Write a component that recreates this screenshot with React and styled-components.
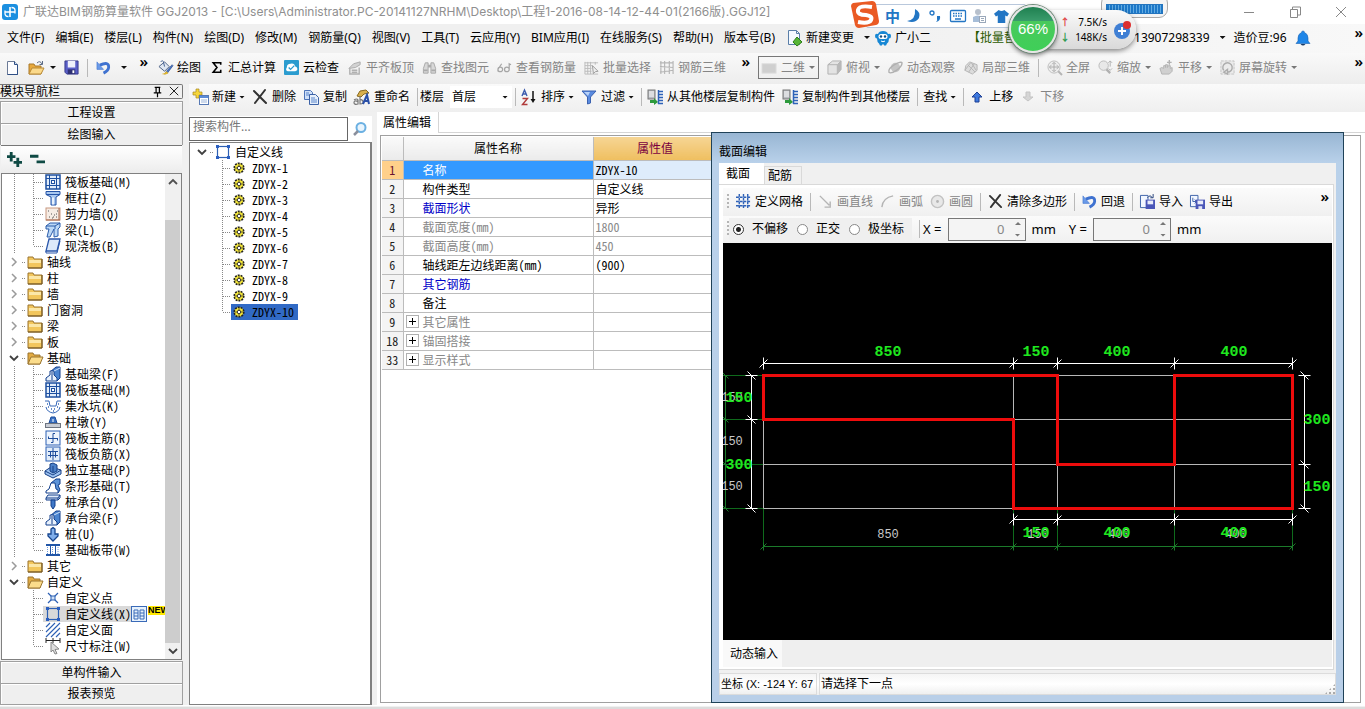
import React, { Component } from 'react';
import styled, { createGlobalStyle, css } from 'styled-components';

const uiFont = '"Noto Sans", "Noto Sans CJK SC", sans-serif';
const gridFont = '"Noto Sans CJK SC", "Liberation Mono", monospace';

const GlobalStyle = createGlobalStyle`
  *, *::before, *::after {
    box-sizing: border-box;
  }
  body {
    margin: 0;
    background: #f0f0f0;
    color: #000;
    font: 12px/16px ${uiFont};
    overflow: hidden;
  }
  button, input, select {
    font: inherit;
    color: inherit;
  }
  ul {
    margin: 0;
    padding: 0;
    list-style: none;
  }
`;

/* ---------- icons ---------- */

const Svg = styled.svg`
  flex: none;
  display: block;
  overflow: visible;
`;

const shapes = {
  app: (
    <>
      <rect x="0" y="0" width="16" height="16" rx="3" fill="#1b8fe0" />
      <path d="M8 3v10M3 8h10" stroke="#fff" strokeWidth="1.600" fill="none" />
      <path d="M3 6.500v3q0 3 3.500 3M13 9.500v-3q0-3-3.500-3" stroke="#fff" strokeWidth="1.300" fill="none" />
    </>
  ),
  file: (
    <>
      <path d="M3.500 1.500h7l3 3v10h-10z" fill="#fdfdff" stroke="#6b7a96" />
      <path d="M10.500 1.500v3h3" fill="#cfe0f5" stroke="#2f4f86" />
      <path d="M13.500 5v9.500h-10" fill="none" stroke="#2f4f86" />
    </>
  ),
  openFile: (
    <>
      <path d="M1 4h5l1 2h6v8H1z" fill="#e8a93c" stroke="#a8792a" />
      <path d="M4 8h12l-3 6H1z" fill="#fbd98a" stroke="#b98a36" />
      <path d="M9 3q3-3 5 1M14.500 1v3.500h-3" fill="none" stroke="#5b6b85" />
    </>
  ),
  save: (
    <>
      <path d="M1 1h14v14H3l-2-2z" fill="#5a5fc8" stroke="#34388a" />
      <rect x="4" y="1" width="8" height="7" fill="#eef0fb" />
      <rect x="4" y="10" width="8" height="5" fill="#2f3175" />
      <rect x="9" y="11" width="2" height="3" fill="#fff" />
    </>
  ),
  undo: (
    <>
      <path d="M4 5.500q10-4.500 9.500 2.500-.5 3.500-5.500 6" fill="none" stroke="#3f72d0" strokeWidth="3" />
      <path d="M1 2v8h7z" fill="#6a9ae8" stroke="#3f72d0" strokeWidth="0.600" />
    </>
  ),
  paint: (
    <>
      <path d="M1 7l6-5 5 5-5 5z" fill="#dfe7f2" stroke="#4a5f82" />
      <path d="M3 2q2-3 3 1l1 4" fill="none" stroke="#39588c" />
      <path d="M15 5l-6 7-2 3 3-1 6-8z" fill="#4a78c8" stroke="#223f7a" strokeWidth="0.600" />
      <path d="M9 12q-2 3-5 3 4 1 7-1z" fill="#e3b72f" />
    </>
  ),
  sigma: <path d="M12.500 5V3H4.500l4 5-4 5h8v-2.500" fill="none" stroke="#000" strokeWidth="1.700" />,
  cloudCheck: (
    <>
      <rect width="16" height="16" rx="1" fill="#2b9ccf" />
      <path d="M4 12q-3-1-1-4 0-4 4-4 4-1 5 3 3 1 2 4l-2 1z" fill="#fff" />
      <path d="M5 8l2 2 4-4" fill="none" stroke="#2b9ccf" strokeWidth="1.500" />
    </>
  ),
  alignTop: (
    <>
      <path d="M2 9l5-5 7-2v3l-5 3z" fill="#d2d2d2" stroke="#aaa" />
      <path d="M3 9v6h10V8M5 11h6M5 13h6" fill="none" stroke="#b0b0b0" strokeWidth="1.500" />
    </>
  ),
  binoculars: (
    <>
      <path d="M1.500 14V9l2-6h3v11zM9.500 14V3h3l2 6v5z" fill="#d8d8d8" stroke="#a8a8a8" />
      <path d="M6.500 5h3v3h-3z" fill="#aaa" />
      <path d="M2 11h4M10 11h4" stroke="#aaa" strokeWidth="2" />
    </>
  ),
  glasses: (
    <path
      d="M1 10a2.500 2.500 0 1 0 5 0 2.500 2.500 0 1 0-5 0L5 4M8 10a2.500 2.500 0 1 0 5 0 2.500 2.500 0 1 0-5 0zM13 10V4l2 1"
      fill="none"
      stroke="#a6a6a6"
      strokeWidth="1.300"
    />
  ),
  batch: (
    <>
      <path d="M1 2v13M4 2v13M7 2v13M1 3h14M1 6h8M1 9h7M1 12h7M1 15h14M12 2v3" stroke="#bbb" fill="none" />
      <path d="M9 6l6 6-3 .5-2 2z" fill="#eee" stroke="#999" />
    </>
  ),
  rebar3d: (
    <path d="M2 1v14M6 1v14M11 1v14M15 1v14M1 3h14M1 7l14 1M1 13l14-2" fill="none" stroke="#b5b5b5" strokeWidth="1.200" />
  ),
  plate: <rect x="0" y="4" width="15" height="10" fill="#cfcfcf" stroke="#dedede" />,
  cube: (
    <>
      <path d="M1 5l5-4h9v9l-4 5H1z" fill="#e3e3e3" stroke="#b0b0b0" />
      <path d="M1 5h10v10M11 5l4-4" fill="none" stroke="#b0b0b0" />
      <path d="M11 5l4-4v9l-4 5z" fill="#b8b8b8" />
    </>
  ),
  orbit: (
    <>
      <circle cx="8" cy="8" r="5" fill="#c4c4c4" />
      <path d="M1 13q-1-4 6-8t8-2q0 4-6 8t-8 2z" fill="none" stroke="#b0b0b0" strokeWidth="1.500" />
    </>
  ),
  part3d: (
    <>
      <path d="M3 6l4-4 8 3v6l-5 4-8-4z" fill="#dcdcdc" stroke="#b4b4b4" />
      <path d="M2 11l6-8M6 13l6-9M5 5l8 8M9 3l5 8" stroke="#b4b4b4" fill="none" />
    </>
  ),
  fullView: (
    <>
      <circle cx="7.500" cy="7.500" r="6.500" fill="#ececec" stroke="#bdbdbd" />
      <path d="M7.500 3v9M3 7.500h9M5.500 4.500l2-2 2 2M5.500 10.500l2 2 2-2M4.500 5.500l-2 2 2 2M10.500 5.500l2 2-2 2" fill="none" stroke="#aaa" />
      <path d="M12 12l4 4" stroke="#b5b5b5" strokeWidth="2" />
    </>
  ),
  zoom: (
    <>
      <circle cx="6" cy="6" r="5" fill="#e8e8e8" stroke="#bababa" />
      <path d="M9 10l4 4" stroke="#b0b0b0" strokeWidth="2.500" />
      <path d="M13 1v6M11 3l2-2 2 2M11 9l2 2 2-2" fill="none" stroke="#b0b0b0" />
    </>
  ),
  pan: (
    <>
      <path d="M3 15l-2-6 2-1 2 1V6h2v2V5h2v3l1-2h2v3l2-1v4l-3 3z" fill="#d0d0d0" stroke="#b2b2b2" />
      <path d="M11 0v5M8.500 2.500h5" stroke="#b2b2b2" strokeWidth="1.500" />
    </>
  ),
  rotate: (
    <>
      <rect x="1" y="1" width="14" height="14" fill="#ebebeb" stroke="#c2c2c2" strokeDasharray="3 1" />
      <path d="M4 11a5 5 0 1 1 4 2M8 10v5l-4-2z" fill="none" stroke="#adadad" strokeWidth="1.500" />
    </>
  ),
  create: (
    <>
      <path d="M4 0h3v3h3v3H7v3H4V6H1V3h3z" fill="#f5d63c" stroke="#a88820" strokeWidth="0.700" />
      <rect x="7.500" y="6.500" width="9" height="9" fill="#fff" stroke="#5779b4" />
      <path d="M8 7h8v2H8z" fill="#5b8bd8" />
      <path d="M9 11h6M9 13h6" stroke="#9db5da" />
    </>
  ),
  remove: <path d="M2 2l12 12M13 1L3 14" stroke="#333" strokeWidth="2" strokeLinecap="round" />,
  copy: (
    <>
      <path d="M1.500 1.500h6l2 2v7h-8z" fill="#cfe0f8" stroke="#4d74b8" />
      <path d="M6.500 5.500h6l3 3v7h-9z" fill="#e6effb" stroke="#3c62a6" />
      <path d="M8 9h4M8 11h6M8 13h6M3 4h3M3 6h3" stroke="#5b86cc" />
    </>
  ),
  rename: (
    <>
      <path d="M3 7l3-5 6-1 3 3-5 1-3 3z" fill="#d9b04c" stroke="#8a6a20" />
      <path d="M0 11q3-2 4 0v4q-4 1-4-1.500t4-1M6 7v8q4 0 3-2.500t-3-1.500" fill="none" stroke="#777" strokeWidth="1.200" />
      <path d="M9 15l4-9 2 9M10.500 12h4" fill="none" stroke="#2a50a8" strokeWidth="2" />
    </>
  ),
  sort: (
    <>
      <path d="M1 7l2.500-6L6 7M2 5h3" fill="none" stroke="#3d5cae" strokeWidth="1.400" />
      <path d="M1.500 9.500h5l-5 6h5" fill="none" stroke="#b03a3a" strokeWidth="1.400" />
      <path d="M12 2v10" stroke="#111" strokeWidth="1.500" />
      <path d="M9.500 10h5L12 14z" fill="#111" />
    </>
  ),
  funnel: (
    <>
      <path d="M1 2h14l-5.500 6v6l-3 1V8z" fill="#5a8be0" stroke="#3b62b0" />
      <path d="M3 3h6L7 7z" fill="#b8d2f8" />
    </>
  ),
  floorCopy: (
    <>
      <rect x="1" y="1" width="7" height="9" fill="#b9bcc2" stroke="#777" />
      <path d="M2 3h5M2 5h5M2 7h5" stroke="#fff" />
      <path d="M3 11h4V9l4 4-4 3v-2H3z" fill="#2d9a3c" />
      <path d="M11.500 1v14M11 2.500h5M11 5.500h5M11 8.500h5M11 11.500h5M11 14.500h5" stroke="#2d62b8" strokeWidth="1.500" />
    </>
  ),
  up: <path d="M8 3l5 5h-3v5H6V8H3z" fill="#3d78dd" stroke="#1d3f94" />,
  down: <path d="M8 12L3 8h3V3h4v5h3z" fill="#d5d5d5" stroke="#c4c4c4" />,
  change: (
    <>
      <path d="M2.500 .5h8l3 3v11h-11z" fill="#f4f9ff" stroke="#5a7ea8" />
      <path d="M10.500 .5v3h3" fill="none" stroke="#5a7ea8" />
      <path d="M11 7l5 5-5 4-4-4z" fill="#56b436" stroke="#2c7d18" />
    </>
  ),
  mascot: (
    <>
      <path d="M0 6q0-3 3-2 1-3 5-3t5 3q3-1 3 2 0 2.500-2 2.500 0 3.500-2 5l-1 2H9v-1H7v1H5l-1-2q-2-1.500-2-5-2 0-2-2.500z" fill="#1787d4" />
      <rect x="3.500" y="4" width="9" height="5" rx="2.500" fill="#fff" />
      <circle cx="6" cy="6.500" r="1.200" fill="#134f80" />
      <circle cx="10" cy="6.500" r="1.200" fill="#134f80" />
      <path d="M6 11q2 1.500 4 0" fill="none" stroke="#fff" />
    </>
  ),
  bell: (
    <>
      <path d="M8 1q1.500 0 1.500 1.500Q13 4 13 8v3l2 2.500H1L3 11V8q0-4 3.500-5.500Q6.500 1 8 1z" fill="#1f86e8" stroke="#1a63b4" strokeWidth="0.600" />
      <path d="M5.500 14h5q-2.500 3-5 0z" fill="#183a66" />
    </>
  ),
  search: (
    <>
      <circle cx="9" cy="6.500" r="4.500" fill="#e8f4fd" stroke="#6bb0e2" strokeWidth="2" />
      <path d="M6 10l-4 4" stroke="#8a8f9c" strokeWidth="2.500" />
    </>
  ),
  folder: (
    <>
      <path d="M1 3h5l1 2h8v9H1z" fill="#f2c65c" stroke="#9a7530" />
      <path d="M2 6h12v3H2z" fill="#fbe7a8" />
      <path d="M1 14h14V5" fill="none" stroke="#6f5320" />
    </>
  ),
  folderOpen: (
    <>
      <path d="M1 3h5l1 2h6v9H1z" fill="#e3ab41" stroke="#9a7530" />
      <path d="M4 7h12l-3 7H1z" fill="#fbdc8b" stroke="#9a7530" />
    </>
  ),
  raft: (
    <>
      <rect x="1" y="1" width="14" height="14" fill="#e2edfa" stroke="#1d4fa0" strokeWidth="1.500" />
      <path d="M4.500 1v14M11.500 1v14M1 4.500h14M1 11.500h14" stroke="#1d4fa0" />
      <rect x="6.500" y="6.500" width="3" height="3" fill="#fff" stroke="#1d4fa0" />
    </>
  ),
  column: (
    <>
      <path d="M1 1.500h14v3l-4 2.500v8H6V7L1 4.500z" fill="#a9c8f0" stroke="#2553a6" />
      <path d="M1 4.500h14" stroke="#2553a6" />
      <path d="M8 7.500v7" stroke="#fff" strokeWidth="1.500" />
    </>
  ),
  wall: (
    <>
      <rect x="1" y="2" width="14" height="12" fill="#f6ece4" stroke="#c79880" />
      <path d="M3 5h1M6 8h1M4 11h1M8 11h1M9 9h1M11 11h1M12 5h1M7 12h1M11 8h1" stroke="#555" />
      <path d="M14 2v12M1 14h14" stroke="#a8664a" />
    </>
  ),
  beam: (
    <>
      <path d="M1 4l4-3h10v4l-2 2v7l-4 1V7L5 15H2l2-8H1z" fill="#bcd8f6" stroke="#2a5cab" />
      <path d="M1 4h9l5-3M10 4v3" fill="none" stroke="#2a5cab" />
    </>
  ),
  slab: (
    <>
      <path d="M4 1h11l-3 12H1z" fill="#dce9fa" stroke="#2b57ab" strokeWidth="1.300" />
      <path d="M1 13v2h11l3-12" fill="none" stroke="#2b57ab" />
    </>
  ),
  foundBeam: (
    <>
      <path d="M5 6l6-5h4v11l-3 3" fill="#4a84d0" stroke="#123f8c" />
      <path d="M1 15v-3l4-3V5h4v4l3 3v3z" fill="#e8f1fc" stroke="#123f8c" />
      <path d="M7 6v8" stroke="#123f8c" />
      <path d="M9 5l6-3" stroke="#cfe2f8" />
    </>
  ),
  pit: (
    <>
      <path d="M0 3h4l1 5h6l1-5h4M1 9q1 5 7 6 6-1 7-6" fill="none" stroke="#3768b8" />
      <path d="M2 6h1M13 6h1M3 9h1M6 11h1M9 11h1M12 9h1M8 13h1" stroke="#3768b8" strokeWidth="1.500" />
    </>
  ),
  pier: (
    <>
      <path d="M4 9l2-6h4l2 6z" fill="#3d74c4" stroke="#1d4c9c" />
      <path d="M7.500 5h1v3h-1z" fill="#fff" />
      <rect x="0.500" y="9.500" width="15" height="4" fill="#c8ccd4" stroke="#6d7480" />
    </>
  ),
  mainBar: (
    <>
      <rect x="1" y="1" width="14" height="14" fill="#edf4fd" stroke="#2d60b4" />
      <path d="M8 3.500v9M3 8.500h10M8 3.500h2M8 12.500H6M3.500 8.500v-2M12.500 8.500v2" fill="none" stroke="#1d4c9c" />
    </>
  ),
  negBar: (
    <>
      <rect x="1" y="1" width="14" height="14" fill="#e2edfa" stroke="#2d60b4" />
      <path d="M8 2v12M3 5.500h10M3 9.500h10M5.500 5.500v6M10.500 5.500v6" fill="none" stroke="#1d4c9c" />
    </>
  ),
  isolated: (
    <>
      <path d="M0 9l6-4 10 3v4l-8 4-8-4z" fill="#9dc2f0" stroke="#163f86" />
      <path d="M5 2l3-1 4 2v6l-4 2-3-2z" fill="#4a80c8" stroke="#163f86" />
      <path d="M8 4v6" stroke="#163f86" />
      <path d="M0 9l8 4 8-5" fill="none" stroke="#163f86" />
    </>
  ),
  strip: (
    <>
      <path d="M6 5l5-4h4v5l-2 1 2 5-2 3z" fill="#5c93d8" stroke="#123f8c" />
      <path d="M1 15h12v-3l-2-1-1-6H6l-2 6-3 2z" fill="#fff" stroke="#123f8c" />
    </>
  ),
  pileCap: (
    <>
      <path d="M1 4l2-3h12v3l-2 2H1z" fill="#dfeafa" stroke="#123f8c" />
      <path d="M1 4h12l2-3M13 4v2" fill="none" stroke="#123f8c" />
      <path d="M6 6h4v6l-2 3-2-3z" fill="#3f78c8" stroke="#123f8c" />
    </>
  ),
  pile: <path d="M8 1.500l2 1.500v5h3v2l-5 5-5-5V8h3V3z" fill="#7fadea" stroke="#16458f" strokeWidth="1.300" />,
  band: (
    <>
      <path d="M1 3h14M1 13h14" stroke="#2156a8" strokeWidth="1.800" />
      <path d="M5.500 3v10M10.500 3v10" stroke="#2156a8" />
      <path d="M2.500 5v8M7.500 5v8M13 5v8" stroke="#6f9ad8" strokeDasharray="1 1" />
    </>
  ),
  point: (
    <>
      <path d="M3 3l10 10M13 3L3 13" stroke="#2d60b4" strokeWidth="1.200" />
      <rect x="6" y="6" width="4" height="4" fill="#cfe0f5" stroke="#2d60b4" />
    </>
  ),
  polyline: (
    <>
      <rect x="2.500" y="2.500" width="11" height="11" fill="none" stroke="#2d60b4" strokeWidth="1.200" />
      <path d="M1 1h3v3H1zM12 1h3v3h-3zM1 12h3v3H1zM12 12h3v3h-3z" fill="#2b5fc0" />
    </>
  ),
  hatch: (
    <path d="M1 5l4-4M1 10l9-9M1 15L15 1M6 15l9-9M11 15l4-4" stroke="#2d60b4" strokeWidth="1.100" />
  ),
  dimension: (
    <>
      <path d="M1 0v5M8 0v5M15 0v5M1 2.500h14" stroke="#222" />
      <path d="M6 4l8 7-4 .5 2 4-2 .5-2-4-2 2z" fill="#ddd" stroke="#888" />
    </>
  ),
  table: (
    <>
      <rect x="0.500" y="0.500" width="15" height="15" fill="#e6f1fc" stroke="#3a6ab8" />
      <path d="M3 4h4v9H3zM9 4h4v9H9zM3 7h4M3 10h4M9 7h4M9 10h4" fill="none" stroke="#3a6ab8" />
    </>
  ),
  gear: (
    <>
      <circle cx="8" cy="8" r="5.500" fill="#f4e638" stroke="#222" strokeWidth="1.800" strokeDasharray="2.200 1.200" />
      <path d="M8 3v10M3 8h10" stroke="#222" strokeWidth="0.800" />
      <circle cx="8" cy="8" r="2" fill="#fff" stroke="#222" />
    </>
  ),
  expandAll: (
    <path d="M4.500 0v10M0 5h9M11.500 6v10M7 11h9" stroke="#0f4a44" strokeWidth="3" />
  ),
  collapseAll: <path d="M0 4.500h9M7 10.500h9" stroke="#0f4a44" strokeWidth="3" />,
  mesh: <path d="M3.500 0v16M8 0v16M12.500 0v16M0 3.500h16M0 8h16M0 12.500h16" stroke="#2f62b8" strokeWidth="1.500" strokeDasharray="3 1" />,
  line: <path d="M2 2l10 10M13 8v6H7" fill="none" stroke="#b4b4b4" strokeWidth="1.500" />,
  arc: <path d="M2 14Q3 4 14 2" fill="none" stroke="#b4b4b4" strokeWidth="1.500" />,
  circle: (
    <>
      <circle cx="8" cy="8" r="6.500" fill="#e8e8e8" stroke="#c2c2c2" strokeWidth="1.500" />
      <circle cx="8" cy="8" r="1.500" fill="#b4b4b4" />
    </>
  ),
  importFile: (
    <>
      <path d="M.5 1.500h8v13h-8z" fill="#f2f7ff" stroke="#3a5fa8" />
      <rect x="6" y="6" width="10" height="10" fill="#4a56b8" />
      <rect x="8" y="7" width="6" height="4" fill="#e8ebfa" />
      <path d="M8 4q3-4 5 0M14 0v4h-3" fill="none" stroke="#223f7a" />
    </>
  ),
  exportFile: (
    <>
      <path d="M.5 1.500h8v12h-8z" fill="#f2f7ff" stroke="#3a5fa8" />
      <path d="M3 4v4h4M5 6l2 2-2 2" fill="none" stroke="#3a5fa8" />
      <rect x="6" y="6" width="10" height="10" fill="#4a56b8" />
      <rect x="8" y="7" width="6" height="4" fill="#e8ebfa" />
      <rect x="9" y="13" width="4" height="3" fill="#dfe2f5" />
    </>
  ),
  pin: <path d="M5 3.500h6M6.500 3v6M10 3v6M4 9.500h8M8 10v4" stroke="#000" strokeWidth="1.300" />,
  cross: <path d="M3 3l9 9M12 3l-9 9" stroke="#111" />,
  right: <path d="M6 4l4 4-4 4" fill="none" stroke="#9a9a9a" strokeWidth="1.500" />,
  open: <path d="M4 6l4 4 4-4" fill="none" stroke="#404040" strokeWidth="1.800" />,
  scrollUp: <path d="M4 10l4-4 4 4" fill="none" stroke="#505050" strokeWidth="1.800" />,
  moon: <path d="M9 1q6 3 4 9-4 6-12 3 9-1 8-12z" fill="#2376c4" />,
  comma: (
    <>
      <circle cx="4" cy="5" r="2" fill="none" stroke="#2376c4" strokeWidth="1.300" />
      <path d="M9 8h3q1 5-4 6 2-2 1-3z" fill="#2376c4" />
    </>
  ),
  keyboard: (
    <>
      <rect x="0.500" y="2.500" width="15" height="11" rx="1" fill="none" stroke="#2376c4" strokeWidth="1.300" />
      <path d="M3 5.500h10M3 8h10" stroke="#2376c4" strokeWidth="1.500" strokeDasharray="1.500 1" />
      <path d="M5 11h6" stroke="#2376c4" strokeWidth="1.500" />
    </>
  ),
  person: (
    <>
      <circle cx="6" cy="4" r="3" fill="#b7c0cc" />
      <path d="M1 14V9q5-3 9 0v5z" fill="#a6bdd8" />
      <rect x="7.500" y="8.500" width="6" height="6" fill="#fff" stroke="#9aa8ba" />
      <path d="M9 10.500h3M9 12.500h3" stroke="#9aa8ba" />
    </>
  ),
  shirt: <path d="M5 1q3 2 6 0l5 4-2 3-2-1v8H4V7L2 8 0 5z" fill="#2376c4" />,
  minimize: <path d="M3 8.500h10" stroke="#888" />,
  restore: <path d="M3.500 5.500h7v8h-7zM5.500 5v-2h8v8h-3" fill="none" stroke="#888" />,
  close: <path d="M3 3l10 10M13 3L3 13" stroke="#888" />,
};

const Icon = ({ name, size = 16 }) => (
  <Svg width={size} height={size} viewBox="0 0 16 16" aria-hidden="true">
    {shapes[name]}
  </Svg>
);

/* ---------- shared parts ---------- */

const Caret = styled.i`
  flex: none;
  width: 6px;
  height: 3px;
  background: ${({ dim }) => (dim ? '#777' : '#111')};
  clip-path: polygon(0 0, 100% 0, 50% 100%);
`;

const PlainButton = styled.button`
  display: flex;
  align-items: center;
  flex: none;
  padding: 0;
  border: 0;
  background: none;
  white-space: nowrap;
`;

const ToolButton = styled(PlainButton)`
  gap: 4px;
  color: ${({ disabled }) => (disabled ? '#858585' : '#000')};

  ${Caret} {
    margin-left: ${({ $wide }) => ($wide ? '6px' : '0')};
  }
`;

const Divider = styled.span`
  flex: none;
  width: 1px;
  height: 18px;
  background: #b9b9b9;
`;

const More = styled(PlainButton)`
  align-self: flex-start;
  margin-left: auto;
  height: 16px;
  font-size: 15px;
  font-weight: 600;
`;

const Tools = ({ items, iconSize = 15 }) =>
  items.map(({ icon, label, off, caret, divider, wide }, i) =>
    divider ? (
      <Divider key={i} />
    ) : (
      <ToolButton key={label} disabled={off} $wide={wide} type="button">
        {icon && <Icon name={icon} size={iconSize} />}
        {label}
        {caret && <Caret dim={off ? 1 : undefined} />}
      </ToolButton>
    ),
  );

/* ---------- window frame ---------- */

const Window = styled.div`
  position: relative;
  display: flex;
  flex-direction: column;
  height: 100vh;
  min-width: 1200px;
`;

const TitleBar = styled.header`
  display: flex;
  align-items: center;
  flex: none;
  gap: 5px;
  height: 24px;
  padding-left: 2px;
  background: #fff;
  color: #8f8f8f;
`;

const Title = styled.h1`
  margin: 0;
  font: 12px/16px Inter, 'Noto Sans CJK SC', sans-serif;
  white-space: nowrap;
`;

const WindowButtons = styled.div`
  display: flex;
  gap: 30px;
  height: 20px;
  margin-left: auto;
  padding-right: 16px;
`;

const MenuBar = styled.nav`
  display: flex;
  align-items: center;
  flex: none;
  gap: 11px;
  height: 29px;
  padding: 0 2px 2px 7px;
  background: linear-gradient(90deg, #f0f0f0, #f0f0f0 60%, #f8f8f8);
`;

const UserButton = styled(ToolButton)`
  margin-left: -6px;
`;

const Account = styled.div`
  display: flex;
  align-items: center;
  align-self: stretch;
  gap: 8px;
  flex: 1;
  margin-left: 26px;
`;

const Promo = styled.a`
  width: 158px;
  color: #2b5a00;
  text-decoration: none;
`;

const Toolbars = styled.div`
  display: flex;
  flex: none;
  height: 31px;
  background: linear-gradient(#f9f9f9, #ededed);
`;

const ToolStrip = styled.div`
  display: flex;
  align-items: center;
  gap: 8px;
  padding: 0 2px 2px 8px;
  ${({ $width }) => ($width ? `flex: none; width: ${$width}px;` : 'flex: 1; min-width: 0;')}
`;

const FileTools = styled(ToolStrip)`
  padding-left: 4px;
`;

const OpenButton = styled(ToolButton)`
  gap: 6px;
`;

const ViewMode = styled(PlainButton)`
  gap: 4px;
  height: 23px;
  margin-left: -2px;
  padding: 0 3px;
  border: 1px solid #777;
  color: #858585;
`;

const Body = styled.div`
  position: relative;
  display: flex;
  flex: 1;
  min-height: 0;
`;

const Footer = styled.footer`
  flex: none;
  height: 4px;
  border-top: 1px solid #fff;
  border-bottom: 2px solid #dcdcdc;
`;

/* ---------- navigation ---------- */

const Nav = styled.aside`
  display: flex;
  flex-direction: column;
  flex: none;
  width: 183px;
`;

const NavTitle = styled.div`
  display: flex;
  align-items: center;
  gap: 2px;
  height: 15px;
  margin-bottom: 2px;
  border: 1px solid #777;
  border-left: 0;
  border-radius: 0 2px 2px 0;

  span {
    flex: 1;
  }
`;

const NavButton = styled.button`
  flex: none;
  height: 22px;
  padding: 0;
  border: 1px solid #a0a0a0;
  border-bottom-width: ${({ $last }) => ($last ? '1px' : '0')};
  background: #efefef;
  box-shadow: inset 1px 1px #fff;
`;

const NavTools = styled.div`
  display: flex;
  align-items: center;
  flex: none;
  gap: 8px;
  height: 28px;
  margin: 0 1px;
  padding-left: 6px;
  border-top: 1px solid #777;
  background: linear-gradient(#fff, #ececec);
`;

const TreeFrame = styled.div`
  display: flex;
  flex: 1;
  min-height: 0;
  margin: 0 1px 1px;
  border: 1px solid #808080;
  background: #fff;
  overflow: hidden;
`;

const Tree = styled.ul`
  flex: 1;
  min-width: 0;
  overflow: hidden;
  font-family: ${gridFont};
  font-feature-settings: 'hwid';
`;

const dots = 'repeating-linear-gradient(180deg, #888 0 1px, transparent 1px 2px)';
const dotsAcross = 'repeating-linear-gradient(90deg, #888 0 1px, transparent 1px 2px)';

const Rail = styled.span`
  flex: none;
  align-self: ${({ $end }) => ($end ? 'flex-start' : 'stretch')};
  width: 1px;
  height: ${({ $end }) => ($end ? '8px' : 'auto')};
  background: ${({ $blank }) => ($blank ? 'none' : dots)};
`;

const Branch = styled.span`
  flex: none;
  width: ${({ $width }) => $width}px;
  height: 1px;
  background: ${dotsAcross};
`;

const TreeRow = styled.li`
  display: flex;
  align-items: center;
  height: 16px;
  white-space: nowrap;
`;

const Group = styled(TreeRow)`
  padding-left: 4px;

  ${Branch} {
    margin: 0 1px 0 0;
  }
`;

const Leaf = styled(TreeRow)`
  padding-left: 12px;

  ${Rail} + ${Rail} {
    margin-left: 18px;
  }
`;

const NodeLabel = styled.span`
  display: flex;
  align-items: center;
  gap: 4px;
  height: 16px;
  padding-left: ${({ $pad = 1 }) => $pad}px;
  ${({ $selected }) =>
    $selected &&
    css`
      background: #d9d9d9;
    `}
`;

const NewBadge = styled.em`
  align-self: flex-start;
  height: 9px;
  margin-left: 1px;
  background: #ffe800;
  font: bold 9px/9px 'Liberation Sans', sans-serif;
`;

const ScrollBar = styled.div`
  display: flex;
  flex-direction: column;
  flex: none;
  width: 16px;
  background: #f0f0f0;
`;

const Thumb = styled.div`
  flex: 1;
  margin: 30px 1px 0 0;
  background: #cdcdcd;
`;

/* ---------- component list ---------- */

const Main = styled.main`
  display: flex;
  flex-direction: column;
  flex: 1;
  min-width: 0;
  margin-left: 6px;
`;

const ComponentTools = styled.div`
  display: flex;
  align-items: center;
  flex: none;
  gap: 7px;
  height: 28px;
  padding: 0 3px 2px;
  background: linear-gradient(#fafafa, #efefef);

  ${Caret} {
    margin-left: -1px;
  }

  ${Divider} {
    margin-right: -2px;
  }
`;

const FloorField = styled.label`
  display: flex;
  align-items: center;
  gap: 6px;
  margin: 0 -4px 0 -3px;
`;

const FloorSelect = styled.span`
  display: flex;
  align-items: center;
  width: 62px;
  height: 22px;
  padding-right: 4px;
  background: #fff;

  select {
    flex: 1;
    appearance: none;
    padding: 0 2px;
    border: 0;
    background: none;
  }
`;

const Panes = styled.div`
  display: flex;
  flex: 1;
  min-height: 0;
`;

const ListPane = styled.section`
  display: flex;
  flex-direction: column;
  flex: none;
  width: 183px;
  margin-top: 4px;
`;

const SearchRow = styled.div`
  display: flex;
  height: 26px;
  background: #fff;

  input {
    flex: 1;
    min-width: 0;
    margin: 1px 0;
    padding: 0 3px 4px;
    border: 1px solid #666;
    outline: 0;
  }

  input::placeholder {
    color: #777;
  }

  button {
    padding: 0 4px;
  }
`;

const ComponentTree = styled(Tree)`
  padding-top: 1px;
  border: 1px solid #808080;
  border-right-width: 2px;
  background: #fff;
`;

const ComponentLeaf = styled(TreeRow)`
  padding-left: 32px;
`;

const ComponentName = styled.span`
  display: flex;
  align-items: center;
  gap: 6px;
  height: 16px;
  padding: 0 4px 0 1px;
  background: ${({ $selected }) => ($selected ? '#316ac5' : 'none')};
`;

/* ---------- properties ---------- */

const PropertyPane = styled.section`
  display: flex;
  flex-direction: column;
  flex: 1;
  min-width: 0;
  margin-left: 5px;
  padding: 0 4px 2px 3px;
  background: #fff;
`;

const PropertyTab = styled.div`
  height: 21px;
  margin: 0 -4px 2px -3px;
  border-bottom: 1px solid #d5d5d5;

  button {
    height: 21px;
    padding: 0 7px 0 6px;
    border: 0;
    border-right: 1px solid #d5d5d5;
    background: #fff;
  }
`;

const Sheet = styled.div`
  flex: 1;
  min-height: 0;
  padding: 1px;
  border: 1px solid #a0a0a0;
`;

const PropertyTable = styled.table`
  border-collapse: collapse;
  table-layout: fixed;
  width: 335px;
  font-family: ${gridFont};
  font-feature-settings: 'hwid';

  th,
  td {
    height: 19px;
    padding: 0 2px;
    border: 1px solid #bcbcbc;
    border-left: 0;
    border-top: 0;
    line-height: 16px;
    font-weight: 400;
    text-align: left;
    white-space: nowrap;
  }

  thead th {
    height: 23px;
    background: linear-gradient(#fafafa, #ebebeb);
    text-align: center;
  }

  thead th:last-child {
    background: linear-gradient(#f6d594, #efbf60);
    color: #7a0040;
  }
`;

const RowNumber = styled.th`
  && {
    padding: 0;
    background: ${({ $selected }) => ($selected ? '#ffd08a' : '#f4f4f4')};
    color: ${({ $selected }) => ($selected ? '#6a1030' : '#222')};
    text-align: center;
  }
`;

const NameCell = styled.td`
  && {
    padding-left: ${({ $grouped }) => ($grouped ? '2px' : '19px')};
    background: ${({ $selected }) => ($selected ? '#3399ff' : '#fff')};
    color: ${({ $tone }) => $tone || '#000'};
  }
`;

const ValueCell = styled.td`
  background: ${({ $selected }) => ($selected ? '#deecfb' : '#fff')};
  color: ${({ $tone }) => $tone || '#000'};
`;

const GroupName = styled.span`
  display: flex;
  align-items: center;
  gap: 4px;
`;

const Expander = styled.button`
  position: relative;
  width: 13px;
  height: 13px;
  padding: 0;
  border: 1px solid #b0b0b0;
  background:
    linear-gradient(#000, #000) center / 7px 1px no-repeat,
    linear-gradient(#000, #000) center / 1px 7px no-repeat,
    #fff;
`;

/* ---------- section dialog ---------- */

const Dialog = styled.section`
  position: absolute;
  top: 48px;
  right: 21px;
  bottom: 2px;
  left: 711px;
  display: flex;
  flex-direction: column;
  padding: 0 7px 7px;
  border: 1px solid #1f4258;
  background: linear-gradient(#98b6d3, #b9d1ea 30px, #b9cfe8);
`;

const DialogTitle = styled.h2`
  flex: none;
  height: 30px;
  margin: 0;
  padding-top: 11px;
  font: 12px/16px ${uiFont};
`;

const DialogBody = styled.div`
  display: flex;
  flex-direction: column;
  flex: 1;
  min-height: 0;
  background: #f0f0f0;
`;

const Tabs = styled.div`
  display: flex;
  align-items: flex-end;
  flex: none;
  height: 21px;
`;

const TabButton = styled.button`
  height: ${({ $active }) => ($active ? '21px' : '18px')};
  padding: ${({ $active }) => ($active ? '0 14px 0 7px' : '0 9px 0 3px')};
  border: ${({ $active }) => ($active ? '0' : '1px solid #d9d9d9')};
  border-bottom: 0;
  background: ${({ $active }) => ($active ? '#fff' : '#f0f0f0')};
`;

const TabPage = styled.div`
  display: flex;
  flex-direction: column;
  flex: 1;
  min-height: 0;
  margin: 0 2px 3px 0;
  padding: 3px 1px 2px 4px;
  border: 1px solid #d9d9d9;
  border-left: 0;
  background: #fff;
`;

const DialogTools = styled.div`
  display: flex;
  align-items: center;
  flex: none;
  gap: 7px;
  height: ${({ $short }) => ($short ? '27px' : '28px')};
  padding: 0 3px 1px 4px;
  background: linear-gradient(#fbfbfb, #f0f0f0);
`;

const Grip = styled.span`
  flex: none;
  width: 2px;
  height: 16px;
  background: repeating-linear-gradient(#b5b5b5 0 2px, transparent 2px 4px);
`;

const OffsetModes = styled.div`
  display: flex;
  align-items: center;
  gap: 9px;
  margin-left: -7px;
  padding: 3px 8px 3px 4px;
  background: #efefef;
`;

const RadioLabel = styled.label`
  display: flex;
  align-items: center;
  gap: 8px;

  input {
    appearance: none;
    width: 11px;
    height: 11px;
    margin: 0;
    border: 1px solid #888;
    border-radius: 50%;
    background: #fff;
  }

  input:checked {
    border-color: #333;
    background: radial-gradient(#222 0 2px, #fff 3px);
  }
`;

const NumberLabel = styled.label`
  display: flex;
  align-items: center;
  gap: 6px;
  margin: 0 10px 0 -4px;
  font-size: 13px;
  white-space: nowrap;
`;

const NumberBox = styled.span`
  display: flex;
  align-items: center;
  width: 78px;
  height: 23px;
  padding-right: 4px;
  border: 1px solid #777;
  background: #f4f4f4;

  input {
    flex: 1;
    min-width: 0;
    padding: 0 10px 0 0;
    border: 0;
    background: none;
    color: #888;
    text-align: right;
  }
`;

const Spinner = styled.span`
  display: grid;
  gap: 9px;

  i:first-child {
    transform: rotate(180deg);
  }
`;

const Canvas = styled.div`
  flex: 1;
  min-height: 0;
  background: #000;
  overflow: hidden;

  svg {
    display: block;
  }
`;

const DynamicBar = styled.div`
  flex: none;
  height: 27px;
  background: #efefef;

  button {
    height: 27px;
    padding: 0 4px 0 7px;
    border: 0;
    background: #f9f9f9;
  }
`;

const StatusBar = styled.div`
  display: flex;
  flex: none;
  gap: 2px;
  height: 22px;
  background: linear-gradient(#f4f4f4, #fff 50%, #eee);
`;

const StatusCell = styled.span`
  flex: ${({ $width }) => ($width ? `0 0 ${$width}px` : '1')};
  height: 22px;
  padding-left: 1px;
  border: 1px solid #dcdcdc;
  font: ${({ $width }) => ($width ? '11px' : '12px')}/20px 'Liberation Sans', 'Noto Sans CJK SC', sans-serif;
  white-space: nowrap;
`;

const SizeGrip = styled.i`
  align-self: flex-end;
  flex: none;
  width: 12px;
  height: 12px;
  margin-left: -14px;
  background: radial-gradient(#aaa 1px, transparent 1px) 0 0 / 4px 4px;
  clip-path: polygon(100% 0, 100% 100%, 0 100%);
`;

/* ---------- floating widgets ---------- */

const ImeBar = styled.div`
  position: absolute;
  top: 4px;
  left: 866px;
  display: flex;
  align-items: center;
  gap: 6px;
  width: 160px;
  height: 24px;
  padding-left: 18px;
  border: 1px solid #b9c8dc;
  border-radius: 2px;
  background: #fff;
  color: #2376c4;
  font-size: 15px;
  font-weight: 700;
`;

const ImeLogo = styled.svg`
  position: absolute;
  top: 0;
  left: 850px;
`;

const TrayBar = styled.div`
  position: absolute;
  top: -6px;
  right: 197px;
  width: 67px;
  height: 24px;
  padding: 9px 4px 3px;
  border: 1px solid #aaa;
  border-radius: 9px;
  background: #f4f4f4;

  &::after {
    content: '';
    display: block;
    height: 10px;
    border: 1px solid #2474bd;
    background: repeating-linear-gradient(90deg, #1d78c8 0 2px, #62abe2 2px 3px);
  }
`;

const SpeedPill = styled.div`
  position: absolute;
  top: 10px;
  right: 229px;
  display: flex;
  align-items: center;
  gap: 6px;
  width: 102px;
  height: 39px;
  padding: 0 5px 0 26px;
  border-radius: 20px;
  background: linear-gradient(#fafafa, #d9d9d9);
  box-shadow: 0 2px 5px rgba(0, 0, 0, 0.45);
`;

const Speeds = styled.div`
  flex: 1;
  font-size: 10px;
  line-height: 15px;
  text-align: right;
  white-space: nowrap;

  div {
    display: flex;
    justify-content: space-between;
  }
`;

const Arrow = styled.b`
  color: ${({ $tone }) => $tone};
`;

const Ball = styled.div`
  position: absolute;
  top: 5px;
  right: 308px;
  width: 48px;
  height: 48px;
  border: 2px solid #e6e6e6;
  border-radius: 50%;
  background: linear-gradient(#1f8050 0, #3a9c6c 14px, #49c95c 14px, #3fcf58);
  box-shadow: 0 0 0 1px #6d8a78, 0 2px 5px rgba(0, 0, 0, 0.6);
  color: #fff;
  font: 15px/44px 'Liberation Sans', sans-serif;
  text-align: center;
`;

/* ---------- data ---------- */

const menus = [
  '文件(F)', '编辑(E)', '楼层(L)', '构件(N)', '绘图(D)', '修改(M)', '钢筋量(Q)',
  '视图(V)', '工具(T)', '云应用(Y)', 'BIM应用(I)', '在线服务(S)', '帮助(H)', '版本号(B)',
];

const drawTools = [
  { icon: 'paint', label: '绘图' },
  { icon: 'sigma', label: '汇总计算' },
  { icon: 'cloudCheck', label: '云检查' },
  { icon: 'alignTop', label: '平齐板顶', off: true },
  { icon: 'binoculars', label: '查找图元', off: true },
  { icon: 'glasses', label: '查看钢筋量', off: true },
  { icon: 'batch', label: '批量选择', off: true },
  { icon: 'rebar3d', label: '钢筋三维', off: true },
];

const viewTools = [
  { icon: 'cube', label: '俯视', off: true, caret: true },
  { icon: 'orbit', label: '动态观察', off: true },
  { icon: 'part3d', label: '局部三维', off: true },
  { divider: true },
  { icon: 'fullView', label: '全屏', off: true },
  { icon: 'zoom', label: '缩放', off: true, caret: true },
  { icon: 'pan', label: '平移', off: true, caret: true },
  { icon: 'rotate', label: '屏幕旋转', off: true, caret: true },
];

const editTools = [
  { icon: 'create', label: '新建', caret: true },
  { icon: 'remove', label: '删除' },
  { icon: 'copy', label: '复制' },
  { icon: 'rename', label: '重命名' },
  { divider: true },
];

const componentTools = [
  { divider: true },
  { icon: 'sort', label: '排序', caret: true },
  { icon: 'funnel', label: '过滤', caret: true },
  { divider: true },
  { icon: 'floorCopy', label: '从其他楼层复制构件' },
  { icon: 'floorCopy', label: '复制构件到其他楼层' },
  { divider: true },
  { label: '查找', caret: true },
  { divider: true },
  { icon: 'up', label: '上移' },
  { icon: 'down', label: '下移', off: true },
];

const sectionTools = [
  { icon: 'mesh', label: '定义网格' },
  { divider: true },
  { icon: 'line', label: '画直线', off: true },
  { icon: 'arc', label: '画弧', off: true },
  { icon: 'circle', label: '画圆', off: true },
  { divider: true },
  { icon: 'remove', label: '清除多边形' },
  { divider: true },
  { icon: 'undo', label: '回退' },
  { divider: true },
  { icon: 'importFile', label: '导入' },
  { icon: 'exportFile', label: '导出' },
];

const navTree = [
  { icon: 'raft', label: '筏板基础(M)' },
  { icon: 'column', label: '框柱(Z)' },
  { icon: 'wall', label: '剪力墙(Q)' },
  { icon: 'beam', label: '梁(L)' },
  { icon: 'slab', label: '现浇板(B)', end: true },
  { group: '轴线' },
  { group: '柱' },
  { group: '墙' },
  { group: '门窗洞' },
  { group: '梁' },
  { group: '板' },
  { group: '基础', open: true },
  { icon: 'foundBeam', label: '基础梁(F)' },
  { icon: 'raft', label: '筏板基础(M)' },
  { icon: 'pit', label: '集水坑(K)' },
  { icon: 'pier', label: '柱墩(Y)' },
  { icon: 'mainBar', label: '筏板主筋(R)' },
  { icon: 'negBar', label: '筏板负筋(X)' },
  { icon: 'isolated', label: '独立基础(P)' },
  { icon: 'strip', label: '条形基础(T)' },
  { icon: 'pileCap', label: '桩承台(V)' },
  { icon: 'foundBeam', label: '承台梁(F)' },
  { icon: 'pile', label: '桩(U)' },
  { icon: 'band', label: '基础板带(W)', end: true },
  { group: '其它' },
  { group: '自定义', open: true },
  { icon: 'point', label: '自定义点', tail: true },
  { icon: 'polyline', label: '自定义线(X)', tail: true, selected: true },
  { icon: 'hatch', label: '自定义面', tail: true },
  { icon: 'dimension', label: '尺寸标注(W)', tail: true, end: true },
];

const components = Array.from({ length: 10 }, (_, i) => `ZDYX-${i + 1}`);

const properties = [
  { no: 1, name: '名称', value: 'ZDYX-10', tone: '#fff', selected: true },
  { no: 2, name: '构件类型', value: '自定义线' },
  { no: 3, name: '截面形状', value: '异形', tone: '#0000c8' },
  { no: 4, name: '截面宽度(mm)', value: '1800', tone: '#888', dim: true },
  { no: 5, name: '截面高度(mm)', value: '450', tone: '#888', dim: true },
  { no: 6, name: '轴线距左边线距离(mm)', value: '(900)' },
  { no: 7, name: '其它钢筋', value: '', tone: '#0000c8' },
  { no: 8, name: '备注', value: '' },
  { no: 9, name: '其它属性', value: '', tone: '#888', grouped: true },
  { no: 18, name: '锚固搭接', value: '', tone: '#888', grouped: true },
  { no: 33, name: '显示样式', value: '', tone: '#888', grouped: true },
];

/* ---------- section drawing ---------- */

const gridX = [40, 290, 334, 451, 569];
const gridY = [132, 176, 221, 265];

const DimText = styled.text`
  fill: ${({ $minor }) => ($minor ? '#c8c8c8' : '#1fe81f')};
  font: ${({ $minor }) => ($minor ? "12px 'Liberation Mono'" : "bold 15px 'Liberation Mono'")}, monospace;
  text-anchor: middle;
`;

const Ruler = ({ at, ticks, vertical, color = '#fff', slash = 4, cap = 6 }) => {
  const first = ticks[0];
  const last = ticks[ticks.length - 1];
  return (
    <g stroke={color} fill="none">
      <path d={vertical ? `M${at} ${first}V${last}` : `M${first} ${at}H${last}`} />
      {ticks.map(t =>
        vertical ? (
          <path key={t} d={`M${at - cap} ${t}h${cap * 2}M${at - slash} ${t - slash}l${slash * 2} ${slash * 2}`} />
        ) : (
          <path key={t} d={`M${t} ${at - cap}v${cap * 2}M${t - slash} ${at + slash}l${slash * 2} ${-slash * 2}`} />
        ),
      )}
    </g>
  );
};

const Drawing = () => (
  <svg width="609" height="397" viewBox="0 0 609 397" role="img" aria-label="截面">
    <g transform="translate(0.5 0.5)">
      <g stroke="#0f6a1c">
        {gridY.map(y => (
          <path key={y} d={`M0 ${y}H40`} />
        ))}
        {gridX.map(x => (
          <path key={x} d={`M${x} 265V304`} />
        ))}
      </g>
      <Ruler at={303} ticks={gridX} color="#1b7a2a" slash={3} cap={4} />
      <Ruler at={2} ticks={gridY} vertical color="#1b7a2a" slash={3} cap={3} />
      <g stroke="#b8b8b8">
        {gridX.map(x => (
          <path key={x} d={`M${x} 132V265`} />
        ))}
        {gridY.map(y => (
          <path key={y} d={`M40 ${y}H569`} />
        ))}
      </g>
      <Ruler at={120} ticks={gridX} />
      <Ruler at={276} ticks={gridX.slice(1)} />
      <Ruler at={28} ticks={[132, 176, 265]} vertical />
      <Ruler at={581} ticks={[132, 221, 265]} vertical />
      <path
        d="M40 132H334V221H451V132H569V265H290V176H40Z"
        fill="none"
        stroke="#ee0c0c"
        strokeWidth="3"
      />
    </g>
    <DimText $minor x="9" y="158">150</DimText>
    <DimText $minor x="9" y="202">150</DimText>
    <DimText $minor x="9" y="247">150</DimText>
    <DimText $minor x="165" y="295">850</DimText>
    <DimText $minor x="315" y="295">150</DimText>
    <DimText $minor x="396" y="295">400</DimText>
    <DimText $minor x="513" y="295">400</DimText>
    <DimText x="165" y="113">850</DimText>
    <DimText x="313" y="113">150</DimText>
    <DimText x="394" y="113">400</DimText>
    <DimText x="511" y="113">400</DimText>
    <DimText x="313" y="294">150</DimText>
    <DimText x="394" y="294">400</DimText>
    <DimText x="511" y="294">400</DimText>
    <DimText x="16" y="159">150</DimText>
    <DimText x="16" y="226">300</DimText>
    <DimText x="594" y="181">300</DimText>
    <DimText x="594" y="248">150</DimText>
  </svg>
);

/* ---------- page ---------- */

const NavNode = ({ node }) => {
  if (node.group) {
    return (
      <Group>
        <Icon name={node.open ? 'open' : 'right'} />
        <Branch $width={3} />
        <NodeLabel>
          <Icon name={node.open ? 'folderOpen' : 'folder'} />
          {node.group}
        </NodeLabel>
      </Group>
    );
  }
  return (
    <Leaf>
      <Rail $blank={node.tail} />
      <Rail $end={node.end} />
      <Branch $width={9} />
      <NodeLabel $pad={2} $selected={node.selected}>
        <Icon name={node.icon} />
        {node.label}
      </NodeLabel>
      {node.selected && (
        <>
          <Icon name="table" />
          <NewBadge>NEW</NewBadge>
        </>
      )}
    </Leaf>
  );
};

class App extends Component {
  constructor(props) {
    super(props);
    this.state = {
      offsetMode: '不偏移',
    };
  }

  setOffsetMode = offsetMode => {
    this.setState({ offsetMode });
  };

  render() {
    const { offsetMode } = this.state;
    return (
      <>
        <GlobalStyle />
        <Window>
          <TitleBar>
            <Icon name="app" />
            <Title>
              广联达BIM钢筋算量软件 GGJ2013 - [C:\Users\Administrator.PC-20141127NRHM\Desktop\工程1-2016-08-14-12-44-01(2166版).GGJ12]
            </Title>
            <WindowButtons>
              <PlainButton aria-label="最小化"><Icon name="minimize" /></PlainButton>
              <PlainButton aria-label="还原"><Icon name="restore" /></PlainButton>
              <PlainButton aria-label="关闭"><Icon name="close" /></PlainButton>
            </WindowButtons>
          </TitleBar>

          <MenuBar>
            {menus.map(menu => (
              <PlainButton key={menu}>{menu}</PlainButton>
            ))}
            <ToolButton $wide>
              <Icon name="change" />
              新建变更
              <Caret />
            </ToolButton>
            <UserButton>
              <Icon name="mascot" />
              广小二
            </UserButton>
            <Account>
              <Promo href="#">【批量替</Promo>
              <ToolButton $wide>
                13907298339
                <Caret />
              </ToolButton>
              <span>造价豆:96</span>
              <PlainButton aria-label="消息"><Icon name="bell" /></PlainButton>
              <More>»</More>
            </Account>
          </MenuBar>

          <Toolbars>
            <FileTools $width={150}>
              <PlainButton aria-label="新建文件"><Icon name="file" /></PlainButton>
              <OpenButton aria-label="打开">
                <Icon name="openFile" />
                <Caret />
              </OpenButton>
              <PlainButton aria-label="保存"><Icon name="save" size={15} /></PlainButton>
              <Divider />
              <ToolButton $wide aria-label="撤销">
                <Icon name="undo" size={15} />
                <Caret />
              </ToolButton>
              <More>»</More>
            </FileTools>
            <ToolStrip $width={602}>
              <Tools items={drawTools} />
              <More>»</More>
            </ToolStrip>
            <ToolStrip>
              <ViewMode>
                <Icon name="plate" size={15} />
                二维
                <Caret dim={1} />
              </ViewMode>
              <Tools items={viewTools} />
              <More>»</More>
            </ToolStrip>
          </Toolbars>

          <Body>
            <Nav>
              <NavTitle>
                <span>模块导航栏</span>
                <PlainButton aria-label="固定"><Icon name="pin" size={15} /></PlainButton>
                <PlainButton aria-label="关闭"><Icon name="cross" size={15} /></PlainButton>
              </NavTitle>
              <NavButton>工程设置</NavButton>
              <NavButton>绘图输入</NavButton>
              <NavTools>
                <PlainButton aria-label="全部展开"><Icon name="expandAll" size={15} /></PlainButton>
                <PlainButton aria-label="全部折叠"><Icon name="collapseAll" size={15} /></PlainButton>
              </NavTools>
              <TreeFrame>
                <Tree>
                  {navTree.map((node, i) => (
                    <NavNode key={i} node={node} />
                  ))}
                </Tree>
                <ScrollBar>
                  <Icon name="scrollUp" />
                  <Thumb />
                  <Icon name="open" />
                </ScrollBar>
              </TreeFrame>
              <NavButton>单构件输入</NavButton>
              <NavButton $last>报表预览</NavButton>
            </Nav>

            <Main>
              <ComponentTools>
                <Tools items={editTools} iconSize={16} />
                <FloorField>
                  楼层
                  <FloorSelect>
                    <select defaultValue="首层">
                      <option>首层</option>
                    </select>
                    <Caret />
                  </FloorSelect>
                </FloorField>
                <Tools items={componentTools} iconSize={16} />
              </ComponentTools>

              <Panes>
                <ListPane>
                  <SearchRow>
                    <input type="text" placeholder="搜索构件..." aria-label="搜索构件" />
                    <PlainButton aria-label="搜索"><Icon name="search" /></PlainButton>
                  </SearchRow>
                  <ComponentTree>
                    <Group>
                      <Icon name="open" />
                      <Branch $width={3} />
                      <NodeLabel>
                        <Icon name="polyline" />
                        自定义线
                      </NodeLabel>
                    </Group>
                    {components.map((name, i) => (
                      <ComponentLeaf key={name}>
                        <Rail $end={i === components.length - 1} />
                        <Branch $width={8} />
                        <ComponentName $selected={i === components.length - 1}>
                          <Icon name="gear" size={14} />
                          {name}
                        </ComponentName>
                      </ComponentLeaf>
                    ))}
                  </ComponentTree>
                </ListPane>

                <PropertyPane>
                  <PropertyTab>
                    <button type="button">属性编辑</button>
                  </PropertyTab>
                  <Sheet>
                    <PropertyTable>
                      <colgroup>
                        <col width="21" />
                        <col width="190" />
                        <col width="124" />
                      </colgroup>
                      <thead>
                        <tr>
                          <th aria-label="序号" />
                          <th>属性名称</th>
                          <th>属性值</th>
                        </tr>
                      </thead>
                      <tbody>
                        {properties.map(({ no, name, value, tone, dim, grouped, selected }) => (
                          <tr key={no}>
                            <RowNumber $selected={selected}>{no}</RowNumber>
                            <NameCell $tone={tone} $grouped={grouped} $selected={selected}>
                              {grouped ? (
                                <GroupName>
                                  <Expander aria-label={name} />
                                  {name}
                                </GroupName>
                              ) : (
                                name
                              )}
                            </NameCell>
                            <ValueCell $tone={dim && tone} $selected={selected}>{value}</ValueCell>
                          </tr>
                        ))}
                      </tbody>
                    </PropertyTable>
                  </Sheet>
                </PropertyPane>
              </Panes>
            </Main>

            <Dialog>
              <DialogTitle>截面编辑</DialogTitle>
              <DialogBody>
                <Tabs>
                  <TabButton $active>截面</TabButton>
                  <TabButton>配筋</TabButton>
                </Tabs>
                <TabPage>
                  <DialogTools>
                    <Grip />
                    <Tools items={sectionTools} />
                    <More>»</More>
                  </DialogTools>
                  <DialogTools $short>
                    <Grip />
                    <OffsetModes>
                      {['不偏移', '正交', '极坐标'].map(mode => (
                        <RadioLabel key={mode}>
                          <input
                            type="radio"
                            name="offset"
                            checked={offsetMode === mode}
                            onChange={() => this.setOffsetMode(mode)}
                          />
                          {mode}
                        </RadioLabel>
                      ))}
                    </OffsetModes>
                    <Divider />
                    {['X', 'Y'].map(axis => (
                      <NumberLabel key={axis}>
                        {axis} =
                        <NumberBox>
                          <input type="text" defaultValue="0" disabled />
                          <Spinner>
                            <Caret dim={1} />
                            <Caret dim={1} />
                          </Spinner>
                        </NumberBox>
                        mm
                      </NumberLabel>
                    ))}
                  </DialogTools>
                  <Canvas>
                    <Drawing />
                  </Canvas>
                  <DynamicBar>
                    <button type="button">动态输入</button>
                  </DynamicBar>
                </TabPage>
                <StatusBar>
                  <StatusCell $width={98}>坐标 (X: -124 Y: 67</StatusCell>
                  <StatusCell>请选择下一点</StatusCell>
                  <SizeGrip />
                </StatusBar>
              </DialogBody>
            </Dialog>
          </Body>
          <Footer />

          <ImeBar>
            中
            <Icon name="moon" />
            <Icon name="comma" />
            <Icon name="keyboard" />
            <Icon name="person" />
            <Icon name="shirt" size={15} />
          </ImeBar>
          <ImeLogo width="30" height="29" viewBox="0 0 30 29" aria-hidden="true">
            <path d="M1 6q0-2 2-3L22 1q3 0 4 3l3 17q0 3-3 4L9 28q-3 0-4-3z" fill="#ea5a24" />
            <path d="M22 7Q9 5 8 10t8 5q7 1 5 5T8 22" fill="none" stroke="#fff" strokeWidth="4" />
          </ImeLogo>
          <TrayBar />
          <SpeedPill>
            <Speeds>
              <div><Arrow $tone="#e04848">↑</Arrow>7.5K/s</div>
              <div><Arrow $tone="#2f9a50">↓</Arrow>148K/s</div>
            </Speeds>
            <Svg width="18" height="18" viewBox="0 0 18 18" aria-hidden="true">
              <circle cx="9" cy="10" r="8" fill="#3f7fd4" />
              <path d="M9 6v8M5 10h8" stroke="#fff" strokeWidth="2" />
              <circle cx="14" cy="4" r="4" fill="#dd2f2f" />
            </Svg>
          </SpeedPill>
          <Ball>66%</Ball>
        </Window>
      </>
    );
  }
}

export default App;
